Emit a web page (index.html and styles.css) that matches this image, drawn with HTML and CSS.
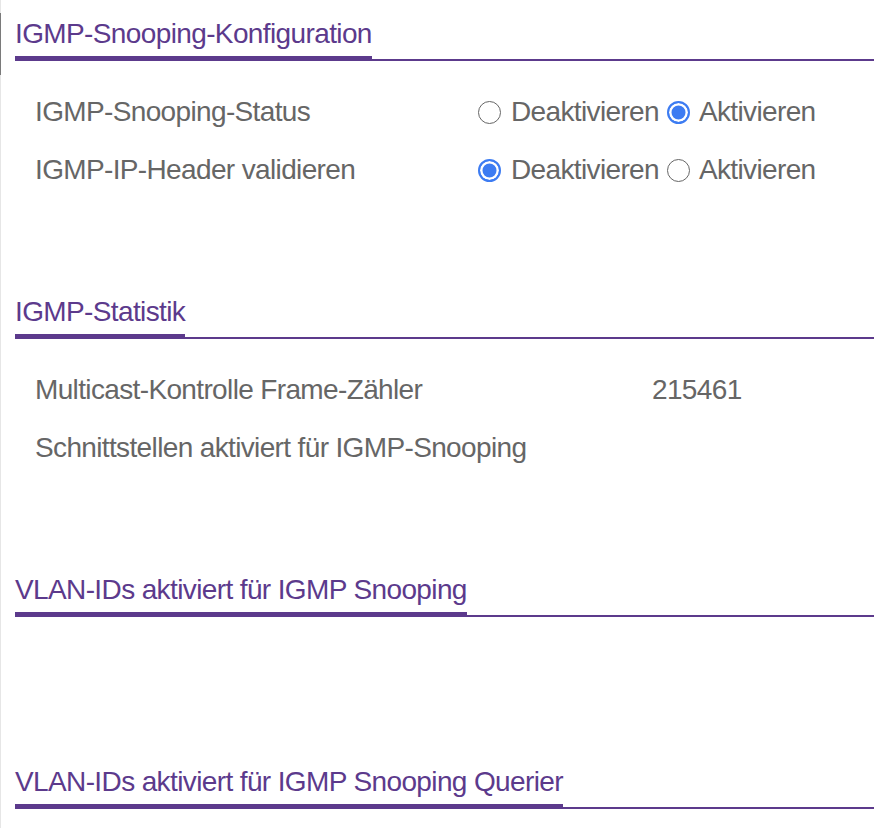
FILE: index.html
```html
<!DOCTYPE html>
<html lang="de">
<head>
<meta charset="utf-8">
<title>IGMP-Snooping</title>
<link rel="stylesheet" href="styles.css">
</head>
<body>
<div class="page">
  <section class="section">
    <h2 class="heading"><span class="heading-text">IGMP-Snooping-Konfiguration</span></h2>
    <div class="table table-config">
      <div class="row">
        <div class="label">IGMP-Snooping-Status</div>
        <div class="value">
          <label class="opt opt-first"><input type="radio" class="radio" name="status"><span>Deaktivieren</span></label>
          <label class="opt"><input type="radio" class="radio" name="status" checked><span>Aktivieren</span></label>
        </div>
      </div>
      <div class="row">
        <div class="label">IGMP-IP-Header validieren</div>
        <div class="value">
          <label class="opt opt-first"><input type="radio" class="radio" name="hdr" checked><span>Deaktivieren</span></label>
          <label class="opt"><input type="radio" class="radio" name="hdr"><span>Aktivieren</span></label>
        </div>
      </div>
    </div>
  </section>

  <section class="section">
    <h2 class="heading"><span class="heading-text">IGMP-Statistik</span></h2>
    <div class="table table-stats">
      <div class="row">
        <div class="label">Multicast-Kontrolle Frame-Zähler</div>
        <div class="value">215461</div>
      </div>
      <div class="row">
        <div class="label">Schnittstellen aktiviert für IGMP-Snooping</div>
        <div class="value"></div>
      </div>
    </div>
  </section>

  <section class="section">
    <h2 class="heading"><span class="heading-text">VLAN-IDs aktiviert für IGMP Snooping</span></h2>
    <div class="table table-empty"></div>
  </section>

  <section class="section">
    <h2 class="heading"><span class="heading-text">VLAN-IDs aktiviert für IGMP Snooping Querier</span></h2>
    <div class="table table-empty"></div>
  </section>
</div>
</body>
</html>
```

FILE: styles.css
```css
html, body {
  margin: 0;
  padding: 0;
  background: #ffffff;
}

body {
  font-family: "Liberation Sans", Arial, sans-serif;
  color: #666666;
  font-size: 28px;
  letter-spacing: -0.64px;
}

.page {
  position: relative;
  height: 828px;
  padding-left: 15px;
  box-shadow: inset 1px 0 0 #e6e6e6;
  overflow: hidden;
}

.page::before {
  content: "";
  position: absolute;
  left: 0;
  top: 13px;
  width: 1px;
  height: 62px;
  background: #7a7a7a;
}

.section {
  margin-bottom: 79px;
}

.heading {
  margin: 0;
  padding-top: 18px;
  font-size: 28px;
  font-weight: normal;
  line-height: 32px;
  letter-spacing: -0.62px;
  color: #5c3a8c;
  border-bottom: 2px solid #5c3a8c;
}

.heading-text {
  display: inline-block;
  padding-bottom: 6px;
  border-bottom: 5px solid #5c3a8c;
  margin-bottom: -2px;
  vertical-align: top;
}

.table {
  padding-top: 22px;
}

.table-empty {
  min-height: 30px;
}

.row {
  display: grid;
  height: 58px;
  align-items: center;
  padding-left: 20px;
  line-height: 32px;
}

.table-config .row {
  grid-template-columns: 443px 1fr;
}

.table-stats .row {
  grid-template-columns: 617px 1fr;
}

.value {
  display: flex;
  align-items: center;
}

.opt {
  display: inline-flex;
  align-items: center;
}

.opt-first {
  margin-right: 8px;
}

.radio {
  appearance: none;
  -webkit-appearance: none;
  box-sizing: border-box;
  flex: none;
  width: 23px;
  height: 23px;
  margin: 0 9px 0 0;
  border: 1.6px solid #666666;
  border-radius: 50%;
  background: #ffffff;
}

.opt-first .radio {
  margin-right: 10px;
}

.radio:checked {
  border: 2px solid #3d7cf2;
  background: #3d7cf2;
  box-shadow: inset 0 0 0 2.5px #ffffff;
}
```
